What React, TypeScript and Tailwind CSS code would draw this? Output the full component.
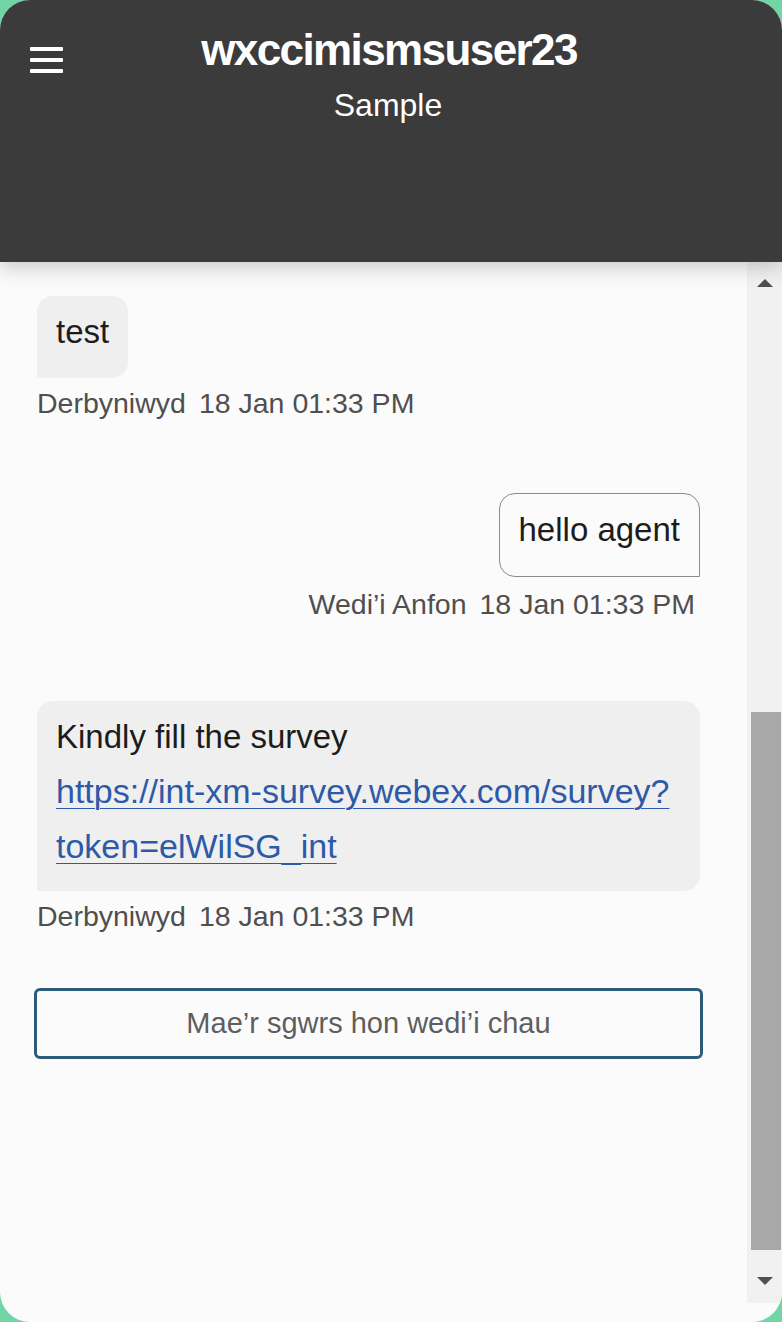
import React from 'react'

const font = "font-['Liberation_Sans',Arial,sans-serif]"

const Meta = ({ label, time, align }: { label: string; time: string; align: 'left' | 'right' }) => (
  <div
    className={`flex gap-[13px] text-[28.5px] leading-[36px] text-[#4f4f4f] ${
      align === 'right' ? 'justify-end pr-[5px] mt-[9px]' : 'mt-[7px]'
    }`}
  >
    <span>{label}</span>
    <span>{time}</span>
  </div>
)

const Arrow = ({ up }: { up?: boolean }) => (
  <svg width="18" height="10" viewBox="0 0 18 10" className="block">
    {up ? <polygon points="1,9 9,1 17,9" fill="#505050" /> : <polygon points="1,1 17,1 9,9" fill="#505050" />}
  </svg>
)

const App: React.FC = () => {
  return (
    <div className={`min-h-screen bg-[#72d5a6] ${font}`}>
      <div className="h-[1322px] rounded-[30px] overflow-hidden flex flex-col bg-[#fbfbfb]">
        <header className="relative z-10 h-[262px] shrink-0 bg-[#3b3b3b] shadow-[0_6px_18px_rgba(60,70,80,0.26)] grid grid-cols-[1fr_auto_1fr]">
          <div className="pl-[30px] pt-[47px]">
            <button className="flex flex-col gap-[7px]">
              <span className="block w-[33px] h-[4px] rounded-[1px] bg-white" />
              <span className="block w-[33px] h-[4px] rounded-[1px] bg-white" />
              <span className="block w-[33px] h-[4px] rounded-[1px] bg-white" />
            </button>
          </div>
          <div className="pt-[28px] flex flex-col items-center text-white">
            <h1 className="text-[44px] leading-[44px] font-bold tracking-[-1.6px] mr-[4px]">wxccimismsuser23</h1>
            <p className="mt-[17px] text-[32px] leading-[32px] mr-[6px]">Sample</p>
          </div>
          <div />
        </header>

        <div className="flex flex-1 min-h-0">
          <div className="flex-1 pt-[34px] pl-[34px] pr-[44px]">
            {/* received */}
            <div className="px-[3px]">
              <div className="inline-block bg-[#efefef] rounded-[16px] rounded-bl-none px-[19px] pt-[9px] pb-[19px] text-[33px] leading-[54px] text-[#1c1c1c]">
                test
              </div>
              <Meta label="Derbyniwyd" time="18 Jan 01:33 PM" align="left" />
            </div>

            {/* sent */}
            <div className="px-[3px] mt-[72px]">
              <div className="flex justify-end">
                <div className="border border-[#8a8a8a] rounded-[16px] rounded-br-none px-[19px] pt-[9px] pb-[19px] text-[33px] leading-[54px] text-[#1c1c1c]">
                  hello agent
                </div>
              </div>
              <Meta label="Wedi’i Anfon" time="18 Jan 01:33 PM" align="right" />
            </div>

            {/* survey */}
            <div className="px-[3px] mt-[79px]">
              <div className="bg-[#efefef] rounded-[16px] rounded-bl-none px-[19px] pt-[9px] pb-[17px] text-[33px] leading-[54px] text-[#1c1c1c]">
                <p>Kindly fill the survey</p>
                <a href="#" className="text-[34px] text-[#2c5aa8] underline underline-offset-[5px] decoration-1 break-words">
                  https://int-xm-survey.webex.com/survey?
                  <wbr />
                  token=elWilSG_int
                </a>
              </div>
              <Meta label="Derbyniwyd" time="18 Jan 01:33 PM" align="left" />
            </div>

            <div className="mt-[54px] h-[71px] border-[3px] border-[#2d5b79] rounded-[6px] flex items-center justify-center text-[29px] text-[#5e5e5e]">
              Mae’r sgwrs hon wedi’i chau
            </div>
          </div>

          <div className="w-[35px] shrink-0 flex flex-col">
            <div className="bg-[#f1f1f1] flex flex-col">
              <div className="h-[450px] flex justify-center pt-[16px]">
                <Arrow up />
              </div>
              <div className="h-[538px] ml-[4px] w-[30px] bg-[#a8a8a8]" />
              <div className="h-[53px] flex justify-center pt-[26px]">
                <Arrow />
              </div>
            </div>
          </div>
        </div>
      </div>
    </div>
  )
}

export default App
